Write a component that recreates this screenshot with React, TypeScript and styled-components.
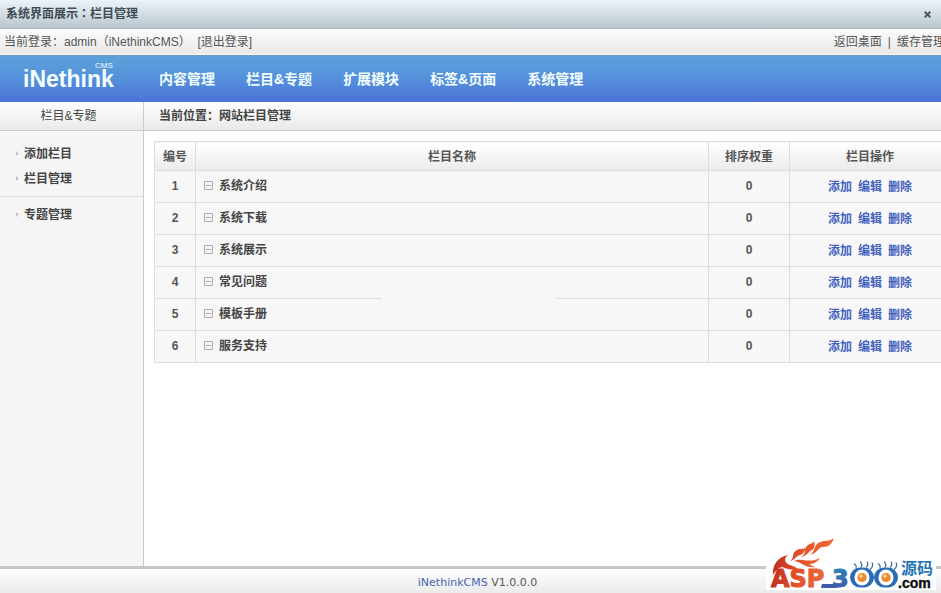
import React from "react";
import styled, { createGlobalStyle } from "styled-components";

const Global = createGlobalStyle`
  *, *::before, *::after { box-sizing: border-box; }
  body {
    margin: 0;
    background: #fff;
    color: #555;
    font: 12px/16px "Liberation Sans", "Noto Sans CJK SC", sans-serif;
  }
  a { color: inherit; text-decoration: none; }
  a:hover { text-decoration: underline; }
`;

const Page = styled.div`
  display: flex;
  flex-direction: column;
  min-height: 100vh;
  overflow: hidden;
`;

const TitleBar = styled.header`
  display: flex;
  align-items: center;
  justify-content: space-between;
  height: 29px;
  padding: 0 8px 0 6px;
  border-bottom: 1px solid #adb6bd;
  background: linear-gradient(#edf2fb, #d3dde4 50%, #bac5cd);
`;

const WindowTitle = styled.h1`
  margin: 0;
  color: #3f4b55;
  font: bold 12px/16px "Liberation Sans", "Noto Sans CJK TC", sans-serif;
`;

const CloseButton = styled.button`
  display: flex;
  padding: 2px;
  border: 0;
  background: none;
  color: #4c5a63;
  cursor: pointer;
`;

const AccountBar = styled.div`
  display: flex;
  align-items: center;
  justify-content: space-between;
  height: 26px;
  padding-left: 4px;
  border-bottom: 1px solid #f8f8f8;
  background: linear-gradient(#fcfcfc, #e9e9e9);
  white-space: pre;
`;

const QuickLinks = styled.nav`
  display: flex;
  gap: 6px;
  margin-right: -4px;
`;

const Header = styled.div`
  display: flex;
  align-items: center;
  height: 47px;
  border-top: 1px solid #6b9cbf;
  background: linear-gradient(#5ba1da, #5590dc 50%, #4c72d6);
  color: #fff;
`;

const Brand = styled.a`
  position: relative;
  width: 159px;
  padding-left: 23px;
  color: #f4ffff;
  font-size: 23px;
  font-weight: bold;
  line-height: 24px;
`;

const BrandTag = styled.span`
  position: absolute;
  top: -5px;
  left: 95px;
  font-size: 8px;
  font-weight: normal;
  line-height: 8px;
`;

const MainNav = styled.nav`
  display: flex;
  gap: 31px;
  color: #f4ffff;
  font-size: 14px;
  font-weight: bold;
  line-height: 20px;
`;

const Body = styled.div`
  display: grid;
  flex: 1;
  grid-template-columns: 144px minmax(0, 1fr);
`;

const Sidebar = styled.aside`
  border-right: 1px solid #ccc;
  background: #f5f5f5;
`;

const SectionBar = styled.div<{ $centered?: boolean }>`
  height: 29px;
  padding: ${(p) => (p.$centered ? "6px 6px 0 0" : "6px 0 0 15px")};
  border-bottom: 1px solid #ccc;
  background: linear-gradient(#fff, #e9e9e9);
  font-weight: ${(p) => (p.$centered ? "normal" : "bold")};
  text-align: ${(p) => (p.$centered ? "center" : "left")};
  color: #444;
`;

const Menu = styled.ul`
  margin: 0;
  padding: 10px 0 5px;
  list-style: none;
  & + & {
    border-top: 1px solid #ddd;
    padding-top: 5px;
  }
`;

const MenuItem = styled.li`
  display: flex;
  align-items: center;
  gap: 5px;
  height: 25px;
  padding-left: 16px;
  color: #444;
  font-weight: bold;
`;

const Main = styled.main`
  background: #fff;
`;

const Table = styled.table`
  width: 100%;
  margin: 10px 0 0 10px;
  border-collapse: collapse;
  table-layout: fixed;
  background: #f7f7f7;
  font-weight: bold;
  text-align: center;
`;

const HeadCell = styled.th<{ $width?: number }>`
  width: ${(p) => (p.$width ? `${p.$width}px` : "auto")};
  height: 29px;
  padding: 2px 0 0;
  border: 1px solid #ddd;
  background: linear-gradient(#fff, #ebebeb);
`;

const Cell = styled.td<{ $name?: boolean; $number?: boolean }>`
  height: 32px;
  padding: ${(p) => (p.$name ? "0 8px 2px" : p.$number ? "0 0 2px" : "0")};
  border: 1px solid #ddd;
  color: ${(p) => (p.$name ? "#444" : "#555")};
  text-align: ${(p) => (p.$name ? "left" : "center")};
`;

const NameGroup = styled.span<{ $gap?: boolean }>`
  position: relative;
  display: flex;
  align-items: center;
  gap: 6px;
  &::after {
    content: "";
    display: ${(p) => (p.$gap ? "block" : "none")};
    position: absolute;
    top: 24px;
    left: 178px;
    width: 174px;
    height: 2px;
    background: #f7f7f7;
  }
`;

const Actions = styled.span`
  display: flex;
  justify-content: center;
  gap: 6px;
  color: #4463bd;
`;

const FooterWrap = styled.div`
  position: relative;
`;

const Footer = styled.footer`
  display: grid;
  grid-template-columns: 1fr auto 1fr;
  align-items: center;
  height: 27px;
  border-top: 3px solid #c8c8c8;
  background: linear-gradient(#fff, #ebebeb);
`;

const Version = styled.p`
  grid-column: 2;
  margin: 4px 0 0 14px;
  font: 11px/16px "DejaVu Sans", sans-serif;
  a { color: #4a62b0; }
`;

const Watermark = styled.a`
  position: absolute;
  right: 5px;
  bottom: 2px;
  display: flex;
`;

const nav = ["内容管理", "栏目&专题", "扩展模块", "标签&页面", "系统管理"];
const menus = [["添加栏目", "栏目管理"], ["专题管理"]];
const channels = ["系统介绍", "系统下载", "系统展示", "常见问题", "模板手册", "服务支持"];
const actions = ["添加", "编辑", "删除"];

function CloseIcon() {
  return (
    <svg width="7" height="7" viewBox="0 0 7 7" aria-hidden="true">
      <path d="M.7.7l5.6 5.6M6.3.7L.7 6.3" stroke="currentColor" strokeWidth="2" />
    </svg>
  );
}

function Arrow() {
  return (
    <svg width="3" height="5" viewBox="0 0 3 5" aria-hidden="true">
      <path d="M0 0l3 2.5L0 5z" fill="#c4c4c4" />
    </svg>
  );
}

function Collapse() {
  return (
    <svg width="9" height="9" viewBox="0 0 9 9" fill="none" stroke="#aaa" aria-hidden="true">
      <path d="M.5.5h8v8h-8zM2 4.5h5" />
    </svg>
  );
}

function Eye({ x }: { x: number }) {
  return (
    <g transform={`translate(${x} 40.5)`}>
      <path
        d="M-6-9q1-3-2-5M-1-10q2-3-1-6M4-10q3-3 1-6M8-8q4-3 2-7"
        fill="none"
        stroke="#3a6d9c"
        strokeWidth="1.2"
      />
      <rect x="-12" y="-10" width="24" height="20" rx="10" fill="#2b6cb4" />
      <ellipse rx="7.5" ry="8" fill="#fff" />
      <circle r="4.6" fill="#ee8a2c" />
      <circle cx="-1" cy="-1.4" r="1.6" fill="#fde3b4" />
    </g>
  );
}

function SiteLogo() {
  return (
    <svg width="170" height="54" viewBox="0 0 170 54" role="img" aria-label="ASP300源码.com">
      <defs>
        <linearGradient id="fire" gradientUnits="userSpaceOnUse" x1="5" y1="20" x2="66" y2="30">
          <stop offset="0" stopColor="#b8291f" />
          <stop offset="0.45" stopColor="#e2502a" />
          <stop offset="1" stopColor="#f0703a" />
        </linearGradient>
        <linearGradient id="sea" x1="0" y1="0" x2="0" y2="1">
          <stop offset="0" stopColor="#2d86bd" />
          <stop offset="1" stopColor="#3f52a8" />
        </linearGradient>
      </defs>
      <path d="M0 27h170v26H0z" fill="#fff" />
      <g fill="url(#fire)">
        <path d="M7 38C6 28 12 20 22 18C17 22 19 26 24 28C27 29 30 30 33 33C26 33 20 32 16 30C12 31 9 34 7 38z" />
        <path d="M24 24C29 21 25 16 31 13C34 11 37 13 41 10C38 14 38 17 34 18C30 19 29 23 24 24z" />
        <path d="M35 20C41 17 37 12 42 8C44 6 47 7 48 4C49 8 49 11 46 13C42 15 41 19 35 20z" />
        <path d="M44 18C50 14 47 8 54 5C59 3 63 5 68 1C66 7 63 10 57 10C52 10 52 16 44 18z" />
        <path d="M28 24C36 20 42 27 54 21C51 26 46 27 43 27C46 29 48 30 50 30C40 32 36 25 28 24z" />
      </g>
      <g fontFamily="'DejaVu Sans', sans-serif" fontWeight="bold" fontSize="24" strokeWidth="1">
        <text x="5" y="50" fill="url(#fire)" stroke="url(#fire)">ASP</text>
        <text x="66" y="50" fill="url(#sea)" stroke="url(#sea)">3</text>
      </g>
      <path d="M56 47h15v4H55z" fill="#3f5cae" />
      <Eye x={96} />
      <Eye x={120} />
      <text x="135" y="37" fill="#2876b8" fontSize="16" fontWeight="bold" fontFamily="'Noto Sans CJK SC', sans-serif">源码</text>
      <text x="132" y="51" fill="#111" stroke="#111" strokeWidth=".4" fontSize="14" fontWeight="bold" fontFamily="'Liberation Sans', sans-serif">.com</text>
    </svg>
  );
}

export default function App() {
  return (
    <Page>
      <Global />
      <TitleBar>
        <WindowTitle>系统界面展示：栏目管理</WindowTitle>
        <CloseButton aria-label="关闭"><CloseIcon /></CloseButton>
      </TitleBar>
      <AccountBar>
        <span>当前登录：admin（iNethinkCMS）  <a href="#logout">[退出登录]</a></span>
        <QuickLinks>
          <a href="#desktop">返回桌面</a>
          <span>|</span>
          <a href="#cache">缓存管理</a>
        </QuickLinks>
      </AccountBar>
      <Header>
        <Brand href="#home">iNethink<BrandTag>CMS</BrandTag></Brand>
        <MainNav>{nav.map((n) => <a key={n} href="#nav">{n}</a>)}</MainNav>
      </Header>
      <Body>
        <Sidebar>
          <SectionBar $centered>栏目&amp;专题</SectionBar>
          {menus.map((m) => (
            <Menu key={m[0]}>
              {m.map((t) => <MenuItem key={t}><Arrow /><a href="#menu">{t}</a></MenuItem>)}
            </Menu>
          ))}
        </Sidebar>
        <Main>
          <SectionBar>当前位置：网站栏目管理</SectionBar>
          <Table>
            <thead>
              <tr>
                <HeadCell $width={41}>编号</HeadCell>
                <HeadCell>栏目名称</HeadCell>
                <HeadCell $width={81}>排序权重</HeadCell>
                <HeadCell $width={161}>栏目操作</HeadCell>
              </tr>
            </thead>
            <tbody>
              {channels.map((c, i) => (
                <tr key={c}>
                  <Cell $number>{i + 1}</Cell>
                  <Cell $name><NameGroup $gap={i === 3}><Collapse />{c}</NameGroup></Cell>
                  <Cell $number>0</Cell>
                  <Cell><Actions>{actions.map((a) => <a key={a} href="#row">{a}</a>)}</Actions></Cell>
                </tr>
              ))}
            </tbody>
          </Table>
        </Main>
      </Body>
      <FooterWrap>
        <Footer><Version><a href="#product">iNethinkCMS</a> V1.0.0.0</Version></Footer>
        <Watermark href="#asp300"><SiteLogo /></Watermark>
      </FooterWrap>
    </Page>
  );
}
